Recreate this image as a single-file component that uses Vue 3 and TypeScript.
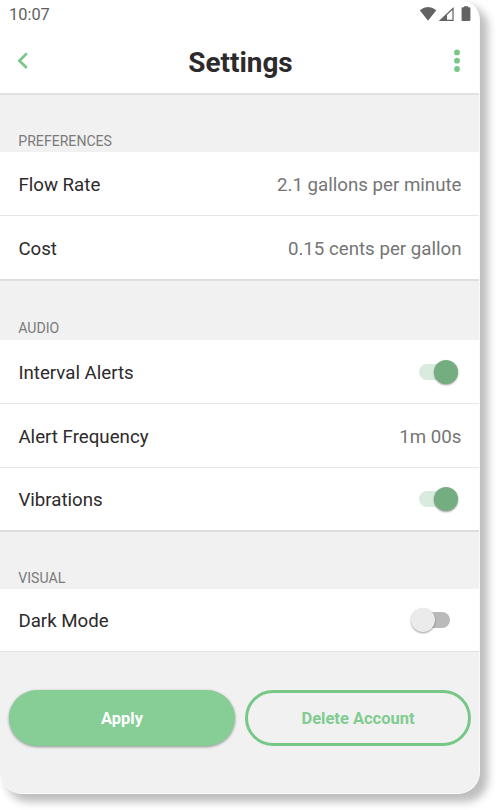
<script setup lang="ts">
import { ref } from 'vue'

interface Row {
  label: string
  value?: string
  toggle?: boolean
}
interface Section {
  id: string
  title: string
  rows: Row[]
}

const sections = ref<Section[]>([
  {
    id: 'preferences',
    title: 'PREFERENCES',
    rows: [
      { label: 'Flow Rate', value: '2.1 gallons per minute' },
      { label: 'Cost', value: '0.15 cents per gallon' },
    ],
  },
  {
    id: 'audio',
    title: 'AUDIO',
    rows: [
      { label: 'Interval Alerts', toggle: true },
      { label: 'Alert Frequency', value: '1m 00s' },
      { label: 'Vibrations', toggle: true },
    ],
  },
  { id: 'visual', title: 'VISUAL', rows: [{ label: 'Dark Mode', toggle: false }] },
])
</script>

<template>
  <div class="page">
    <main class="screen">
      <div class="status">
        <span>10:07</span>
        <svg class="status-icons" width="54" height="18" viewBox="0 0 54 18">
          <path d="M0.8 4.3Q9 -2.4 17.3 4.3L9 14.8Z" fill="#636363" />
          <path d="M19.8 14.9L34.6 0.9V14.9Z" fill="#636363" />
          <path d="M28 9.1L33.4 3.9V13.7H28Z" fill="#fff" />
          <path d="M45 1.2V0.2h4v1h1.4q1 0 1 1v11.9q0 1-1 1h-6.8q-1 0-1-1V2.2q0-1 1-1Z" fill="#636363" />
        </svg>
      </div>
      <header class="header">
        <button class="icon-btn" aria-label="Back">
          <svg width="12" height="18" viewBox="0 0 12 18">
            <path d="M9.8 1.4L2.4 8.7l7.4 7.3" fill="none" stroke="#77c888" stroke-width="2.7" />
          </svg>
        </button>
        <h1>Settings</h1>
        <button class="icon-btn" aria-label="Menu">
          <svg width="8" height="24" viewBox="0 0 8 24">
            <circle cx="4" cy="3.4" r="2.9" fill="#77c888" />
            <circle cx="4" cy="11.7" r="2.9" fill="#77c888" />
            <circle cx="4" cy="20" r="2.9" fill="#77c888" />
          </svg>
        </button>
      </header>

      <section v-for="s in sections" :key="s.id" :class="s.id">
        <h2>{{ s.title }}</h2>
        <div class="rows">
          <div v-for="r in s.rows" :key="r.label" class="row">
            <span class="label">{{ r.label }}</span>
            <span v-if="r.value" class="value">{{ r.value }}</span>
            <button
              v-else
              class="switch"
              :class="{ on: r.toggle }"
              role="switch"
              :aria-checked="r.toggle"
              :aria-label="r.label"
              @click="r.toggle = !r.toggle"
            >
              <span class="knob"></span>
            </button>
          </div>
        </div>
      </section>

      <footer class="actions">
        <button class="btn primary">Apply</button>
        <button class="btn outline">Delete Account</button>
      </footer>
    </main>
  </div>
</template>

<style>
body {
  background: #fff;
}
</style>

<style scoped>
.page {
  height: 810px;
  overflow: hidden;
}
.screen {
  box-sizing: border-box;
  width: 480px;
  height: 794px;
  background: #f1f1f1;
  border-right: 1px solid #fafafa;
  border-bottom: 1px solid #fafafa;
  border-radius: 0 20px 22px 22px;
  box-shadow: 7px 7px 8px 1px rgba(0, 0, 0, 0.26);
  font-family: Roboto, sans-serif;
  color: #2d2a2b;
  display: flex;
  flex-direction: column;
}
button {
  font: inherit;
  border: 0;
  padding: 0;
  background: none;
  cursor: pointer;
}
.status {
  box-sizing: border-box;
  height: 31px;
  padding: 6px 6px 0 9px;
  display: flex;
  justify-content: space-between;
  background: #fff;
  border-top-right-radius: 19px;
  color: #606060;
  font-size: 16.4px;
  line-height: 18px;
}
.header {
  box-sizing: border-box;
  height: 64px;
  padding: 0 18px 2px 17px;
  display: grid;
  grid-template-columns: 20px 1fr 22px;
  align-items: center;
  background: #fff;
  border-bottom: 2px solid #e2e2e2;
}
.icon-btn {
  display: flex;
  width: 12px;
  margin-bottom: 1px;
}
.icon-btn:last-child {
  width: 8px;
  margin-bottom: 0;
  justify-self: end;
}
h1 {
  margin: 4px 0 0 5px;
  text-align: center;
  font-size: 27.9px;
  line-height: 30px;
  font-weight: 700;
}
h2 {
  box-sizing: border-box;
  height: 57px;
  margin: 0;
  padding: 38px 18.3px 0;
  color: #7b7b7b;
  font-size: 14.1px;
  line-height: 16px;
  font-weight: 400;
}
.audio h2 {
  height: 59px;
  padding-top: 39px;
}
.rows {
  background: #fff;
  border-bottom: 2px solid #dedede;
}
.row {
  box-sizing: border-box;
  height: 64px;
  padding: 0 17.5px 0 18.4px;
  display: flex;
  align-items: center;
  justify-content: space-between;
  font-size: 18.7px;
  line-height: 24px;
  border-bottom: 1px solid #e6e6e6;
}
.row:last-child {
  height: 63px;
  border-bottom: 0;
}
.audio .row:last-child,
.visual .row:last-child {
  height: 62px;
}
.visual .rows {
  border-bottom: 1px solid #e2e2e2;
}
.label,
.value {
  padding-top: 2px;
}
.audio .row:last-child .label,
.visual .label {
  padding-top: 1px;
}
.value {
  color: #757575;
}
.switch {
  display: flex;
  align-items: center;
  width: 39px;
  height: 16px;
  margin-right: 4px;
  border-radius: 8px;
  background: linear-gradient(#bababa, #bababa) right / 30px 100% no-repeat;
}
.knob {
  width: 24px;
  height: 24px;
  flex: none;
  border-radius: 50%;
  background: #ebebeb;
  box-shadow: 0 1px 2px rgba(0, 0, 0, 0.4);
}
.switch:not(.on) {
  margin-right: 12px;
}
.switch.on {
  justify-content: flex-end;
  background: #d9ebdf;
}
.switch.on .knob {
  background: #74ad80;
}
.actions {
  display: grid;
  grid-template-columns: 1fr 1fr;
  gap: 10px;
  padding: 38px 8px 0 9px;
}
.btn {
  height: 56px;
  padding-top: 1px;
  border-radius: 28px;
  font-size: 16.5px;
  font-weight: 700;
}
.primary {
  background: #87ce96;
  color: #fff;
  box-shadow: 0 1px 3px rgba(0, 0, 0, 0.4);
}
.outline {
  border: 3px solid #77c888;
  color: #80cc91;
}
</style>
